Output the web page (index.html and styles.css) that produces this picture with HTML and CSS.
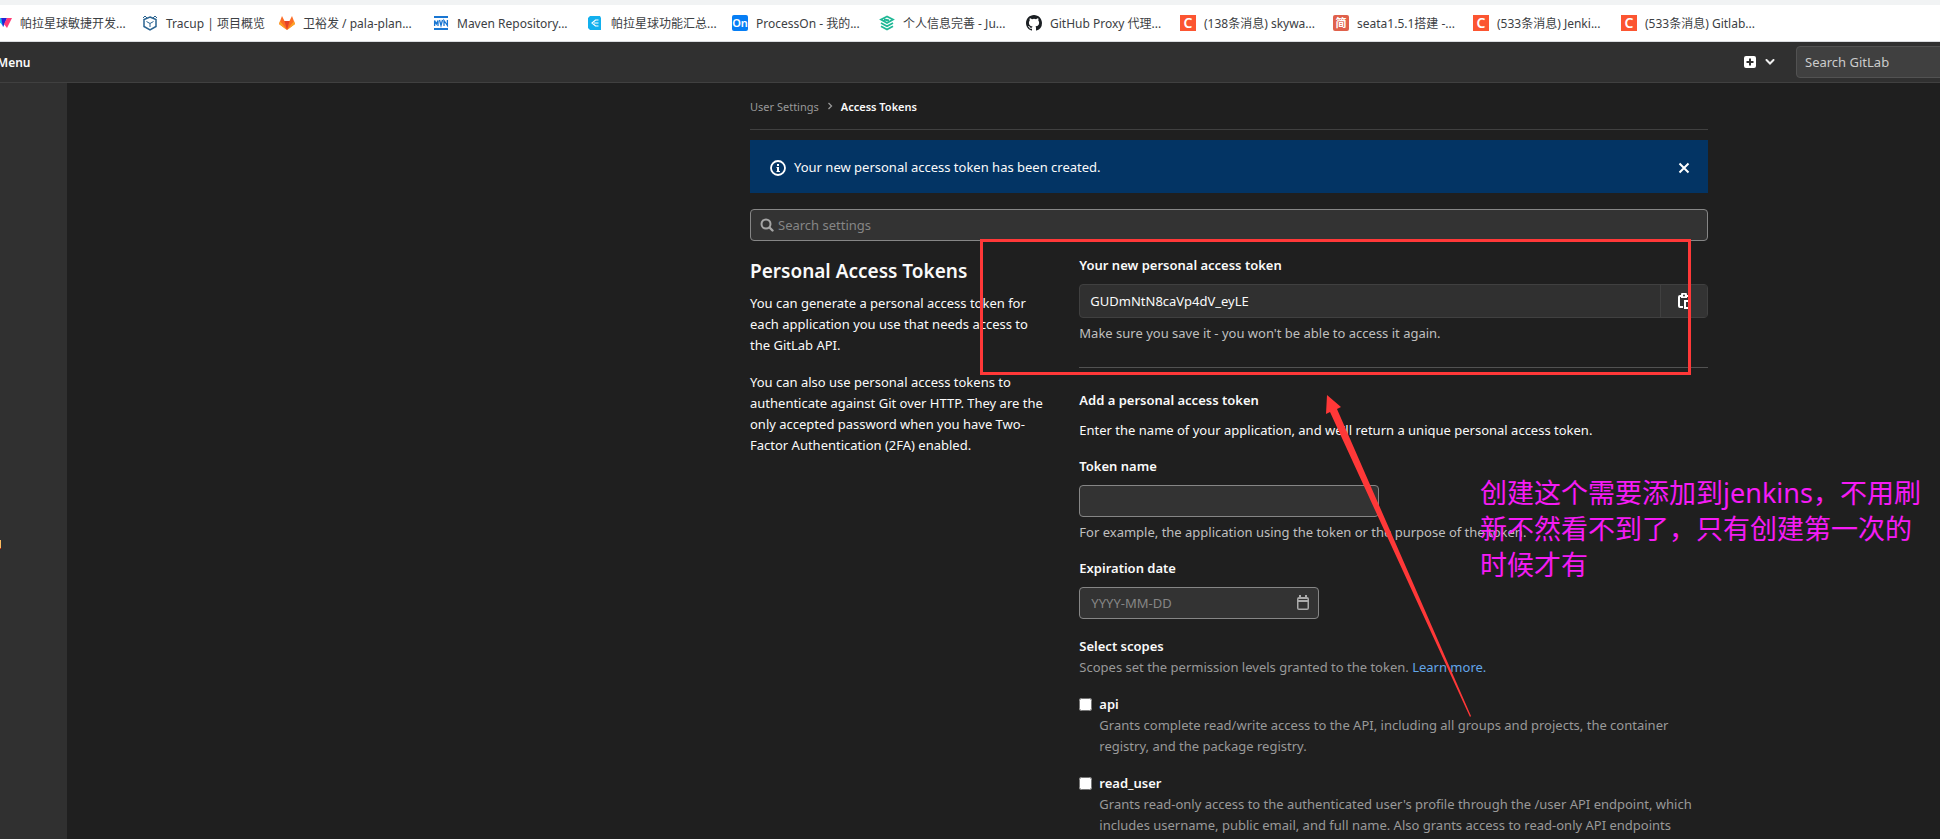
FILE: index.html
```html
<!DOCTYPE html>
<html lang="en">
<head>
<meta charset="utf-8">
<title>Access Tokens · User Settings · GitLab</title>
<link rel="stylesheet" href="styles.css">
</head>
<body>
<nav class="bookmarks" aria-label="Bookmarks">
  <a href="#" class="bookmark"><svg class="favicon" viewBox="0 0 16 16"><path d="M0 3h5l3 9z" fill="#12c2f0"/><path d="M5 3h6l-2 5-2 4z" fill="#2323d6"/><path d="M11 3h5l-5 10-3-4z" fill="#ff3c78"/></svg><span class="bookmark-label">帕拉星球敏捷开发...</span></a>
  <a href="#" class="bookmark"><svg class="favicon" viewBox="0 0 16 16" fill="none" stroke="#2b6491"><path d="M8 2L14 4.500v7L8 15l-6-3.500v-7z" stroke-width="1.500"/><path d="M4.500 6.500L8 8.500l3.500-2M8 8.500V12M1 3l2-2 2 2M11 3l2-2 2 2"/></svg><span class="bookmark-label">Tracup | 项目概览</span></a>
  <a href="#" class="bookmark"><svg class="favicon" viewBox="0 0 16 16"><path d="M3 1l2.500 5h5L13 1l3 8-8 6-8-6z" fill="#fc6d26"/><path d="M5.500 6h5L8 15z" fill="#e24329"/><path d="M0 9l1-3 7 9zM16 9l-1-3-7 9z" fill="#fca326"/></svg><span class="bookmark-label">卫裕发 / pala-plan...</span></a>
  <a href="#" class="bookmark"><svg class="favicon" viewBox="0 0 16 16" fill="none" stroke="#1976d2" stroke-width="2"><path d="M1 2h14M1 14h14"/><path d="M1.600 11V5.500L3.300 9 5 5.500V11M6.500 5l1.500 5.500L9.500 5M11 11V5.500l3.400 5V5" stroke-width="1.300"/></svg><span class="bookmark-label">Maven Repository...</span></a>
  <a href="#" class="bookmark"><svg class="favicon" viewBox="0 0 16 16"><path d="M3 1h10l1 2v12H3l-2-2V3z" fill="#12b0ee"/><path d="M11.500 5H8.500L5 8l3.500 3h3M7 8h4.500" fill="none" stroke="#fff" stroke-width="1.200"/></svg><span class="bookmark-label">帕拉星球功能汇总...</span></a>
  <a href="#" class="bookmark"><span class="favicon tile tile-blue">On</span><span class="bookmark-label">ProcessOn - 我的...</span></a>
  <a href="#" class="bookmark"><svg class="favicon" viewBox="0 0 16 16" fill="none" stroke="#1fb896" stroke-width="1.800"><path d="M8 1.500L2 4.500 8 8l6-3.500zM2 8l6 3.200L14 8M2 11.300l6 3.200 6-3.200M5 4.500l5 1"/></svg><span class="bookmark-label">个人信息完善 - Ju...</span></a>
  <a href="#" class="bookmark"><svg class="favicon" viewBox="0 0 16 16" fill="#1b1f23"><path d="M8 0C3.580 0 0 3.580 0 8c0 3.540 2.290 6.530 5.470 7.590.4.070.55-.17.55-.38 0-.19-.01-.82-.01-1.490-2.010.37-2.530-.49-2.690-.94-.09-.23-.48-.94-.82-1.130-.28-.15-.68-.52-.01-.53.63-.01 1.080.58 1.230.82.72 1.210 1.870.87 2.330.66.07-.52.28-.87.51-1.070-1.780-.2-3.640-.89-3.640-3.950 0-.87.31-1.590.82-2.150-.08-.2-.36-1.020.08-2.120 0 0 .67-.21 2.200.82a7.600 7.600 0 014 0c1.530-1.040 2.200-.82 2.200-.82.44 1.100.16 1.920.08 2.120.51.56.82 1.270.82 2.150 0 3.070-1.870 3.750-3.650 3.950.29.25.54.73.54 1.480 0 1.070-.01 1.930-.01 2.200 0 .21.15.46.55.38A8 8 0 0016 8c0-4.420-3.580-8-8-8z"/></svg><span class="bookmark-label">GitHub Proxy 代理...</span></a>
  <a href="#" class="bookmark"><span class="favicon tile tile-orange">C</span><span class="bookmark-label">(138条消息) skywa...</span></a>
  <a href="#" class="bookmark"><span class="favicon tile tile-red">简</span><span class="bookmark-label">seata1.5.1搭建 -...</span></a>
  <a href="#" class="bookmark"><span class="favicon tile tile-orange">C</span><span class="bookmark-label">(533条消息) Jenki...</span></a>
  <a href="#" class="bookmark"><span class="favicon tile tile-orange">C</span><span class="bookmark-label">(533条消息) Gitlab...</span></a>
</nav>

<header class="topbar">
  <button type="button" class="menu-button">Menu</button>
  <button type="button" class="new-button" aria-label="Create new">
    <svg class="icon-plus" viewBox="0 0 12 12"><path d="M2 0h8a2 2 0 012 2v8a2 2 0 01-2 2H2a2 2 0 01-2-2V2a2 2 0 012-2zm3 2.500V5H2.500v2H5v2.500h2V7h2.500V5H7V2.500z" fill="#fff" fill-rule="evenodd"/></svg>
    <svg class="icon-chevron" viewBox="0 0 10 6"><path d="M1.500 1L5 4.500 8.500 1" fill="none" stroke="#eee" stroke-width="2" stroke-linecap="round"/></svg>
  </button>
  <input class="top-search" type="search" placeholder="Search GitLab" aria-label="Search GitLab">
</header>

<div class="shell">
  <aside class="sidebar"><span class="sidebar-mark"></span></aside>
  <main class="content">
    <nav class="breadcrumb" aria-label="Breadcrumb">
      <a href="#">User Settings</a>
      <svg class="crumb-arrow" viewBox="0 0 6 8"><path d="M1.500 1L4.500 4l-3 3" fill="none" stroke="#999" stroke-width="1.300"/></svg>
      <a href="#" class="current">Access Tokens</a>
    </nav>

    <div class="alert" role="status">
      <svg class="icon" viewBox="0 0 16 16"><circle cx="8" cy="8" r="7" fill="none" stroke="#fff" stroke-width="1.800"/><path d="M7 4h2v2H7zM6.500 7H9v4h1v1H6.500v-1H7V8h-.5z" fill="#fff"/></svg>
      <span class="alert-text">Your new personal access token has been created.</span>
      <button type="button" class="alert-close" aria-label="Dismiss"><svg class="icon-close" viewBox="0 0 12 12"><path d="M1.500 1.500l9 9M10.500 1.500l-9 9" stroke="#fff" stroke-width="2"/></svg></button>
    </div>

    <label class="settings-search">
      <svg class="icon-search" viewBox="0 0 14 14"><circle cx="6" cy="6" r="4.500" fill="none" stroke="#a5a5a5" stroke-width="2"/><path d="M9.500 9.500l3 3" stroke="#a5a5a5" stroke-width="2.400" stroke-linecap="round"/></svg>
      <input type="text" placeholder="Search settings" aria-label="Search settings">
    </label>

    <div class="columns">
      <section class="intro">
        <h1>Personal Access Tokens</h1>
        <p>You can generate a personal access token for each application you use that needs access to the GitLab API.</p>
        <p>You can also use personal access tokens to authenticate against Git over HTTP. They are the only accepted password when you have Two-Factor Authentication (2FA) enabled.</p>
      </section>

      <form class="token-form">
        <label class="field-label" for="new-token">Your new personal access token</label>
        <div class="token-group">
          <input id="new-token" type="text" value="GUDmNtN8caVp4dV_eyLE" readonly>
          <button type="button" aria-label="Copy token"><svg class="icon" viewBox="0 0 16 16"><path d="M7 13H4V4h1v1h6V4h1v2h2V4a2 2 0 00-2-2h-1a3 3 0 00-6 0H4a2 2 0 00-2 2v9a2 2 0 002 2h3zM8 1.500a1 1 0 110 2 1 1 0 010-2z" fill="#fff" fill-rule="evenodd"/><path d="M9 8h5v7H9z" fill="none" stroke="#fff" stroke-width="2"/></svg></button>
        </div>
        <p class="hint">Make sure you save it - you won't be able to access it again.</p>
        <hr>
        <h2>Add a personal access token</h2>
        <p class="lead">Enter the name of your application, and we'll return a unique personal access token.</p>

        <label class="field-label" for="token-name">Token name</label>
        <input class="text-input name-input" id="token-name" type="text">
        <p class="hint hint-name">For example, the application using the token or the purpose of the token.</p>

        <label class="field-label" for="expires">Expiration date</label>
        <div class="text-input date-input">
          <input id="expires" type="text" placeholder="YYYY-MM-DD">
          <svg class="icon" viewBox="0 0 16 16"><path d="M4 0h2v2h4V0h2v2a2 2 0 012 2v9a2 2 0 01-2 2H4a2 2 0 01-2-2V4a2 2 0 012-2zm-.5 4v1h9V4zm0 3v6.500h9V7z" fill="#aaa" fill-rule="evenodd"/></svg>
        </div>

        <h2 class="scopes-title">Select scopes</h2>
        <p class="muted">Scopes set the permission levels granted to the token. <a href="#">Learn more.</a></p>

        <div class="scope">
          <input type="checkbox" id="scope-api"><label for="scope-api">api</label>
          <p>Grants complete read/write access to the API, including all groups and projects, the container registry, and the package registry.</p>
        </div>
        <div class="scope">
          <input type="checkbox" id="scope-read-user"><label for="scope-read-user">read_user</label>
          <p>Grants read-only access to the authenticated user's profile through the /user API endpoint, which includes username, public email, and full name. Also grants access to read-only API endpoints</p>
        </div>
      </form>
    </div>
  </main>
</div>

<div class="mark-box"></div>
<svg class="mark-arrow" viewBox="0 0 146 322"><path d="M2 0l14 12-4 2 134 307-1 1L5 17l-4 2z" fill="#ff3838"/></svg>
<p class="mark-note" lang="zh">创建这个需要添加到jenkins，不用刷新不然看不到了，只有创建第一次的时候才有</p>
</body>
</html>
```
FILE: styles.css
```css
* { box-sizing: border-box; }

body {
  margin: 0;
  height: 100vh;
  overflow: hidden;
  position: relative;
  display: flex;
  flex-direction: column;
  background: #1f1f1f;
  color: #fafafa;
  font: 13px/21px "Noto Sans", "Noto Sans CJK SC", sans-serif;
}

h1, h2, p { margin: 0; }
a { text-decoration: none; }
input, button { font: inherit; color: inherit; }
button { border: 0; padding: 0; background: none; }
svg { display: block; flex: none; }

.icon { width: 16px; height: 16px; }

/* Browser bookmarks */
.bookmarks {
  flex: none;
  display: grid;
  grid-template-columns: 146px 137px 154px 154px 145px 147px 147px 154px 153px 140px 148px 154px;
  align-items: center;
  height: 42px;
  padding-right: 16px;
  margin-left: -4px;
  border-top: 5px solid #f1f3f4;
  border-bottom: 1px solid #dadce0;
  background: #fff;
  font-size: 12px;
}
.bookmark {
  display: flex;
  align-items: center;
  gap: 8px;
  color: #3c4043;
  white-space: nowrap;
}
.favicon { flex: none; width: 16px; height: 16px; }
.tile {
  display: flex;
  align-items: center;
  justify-content: center;
  color: #fff;
  font-size: 11px;
  font-weight: 600;
  line-height: 16px;
}
.tile-blue { background: #067ef5; border-radius: 2px; }
.tile-orange { background: #fc5531; font-size: 14px; }
.tile-red { background: #e0614b; border-radius: 2px; }

/* GitLab top bar */
.topbar {
  flex: none;
  display: flex;
  align-items: center;
  height: 41px;
  border-bottom: 1px solid #404040;
  background: #303030;
}
.menu-button { margin-left: -3px; font-size: 12px; font-weight: 600; }
.new-button { display: flex; align-items: center; gap: 9px; margin-left: auto; }
.icon-plus { width: 12px; height: 12px; }
.icon-chevron { width: 10px; height: 6px; }
.top-search {
  width: 148px;
  height: 32px;
  margin: 0 -4px 0 21px;
  padding: 0 8px;
  border: 1px solid #525252;
  border-radius: 4px;
  background: #404040;
}
.top-search::placeholder { color: #ccc; opacity: 1; }

.shell { flex: 1; min-height: 0; display: flex; }
.sidebar { flex: none; width: 67px; padding-top: 457px; background: #303030; }
.sidebar-mark {
  display: block;
  width: 1px;
  height: 9px;
  background: #fdbc60;
  border-bottom: 1px solid #dd2b0e;
}
.content { flex: 1; padding: 0 232px 0 683px; }

.breadcrumb {
  display: flex;
  align-items: center;
  gap: 8px;
  height: 47px;
  border-bottom: 1px solid #404040;
  font-size: 11px;
}
.breadcrumb a { color: #999; }
.breadcrumb .current { color: #fafafa; font-weight: 600; }
.crumb-arrow { width: 6px; height: 8px; }

.alert {
  display: flex;
  align-items: center;
  gap: 8px;
  margin-top: 10px;
  padding: 17px 18px 15px 20px;
  background: #033464;
}
.alert-text { flex: 1; }
.icon-close { width: 12px; height: 12px; }

.settings-search {
  display: flex;
  align-items: center;
  gap: 4px;
  height: 32px;
  margin-top: 16px;
  padding: 0 9px;
  border: 1px solid #868686;
  border-radius: 4px;
  background: #333;
}
.icon-search { width: 14px; height: 14px; }
.settings-search input,
.date-input input {
  flex: 1;
  min-width: 0;
  padding: 0;
  border: 0;
  outline: 0;
  background: none;
}
::placeholder { color: #868686; opacity: 1; }

.columns {
  display: grid;
  grid-template-columns: 1fr 2fr;
  margin: 0 -15px;
}
.intro, .token-form { padding: 0 15px; }

.intro h1 { margin: 16px 0 8px; font-size: 19px; line-height: 28px; font-weight: 600; }
.intro p { margin-bottom: 16px; }

.token-form { padding-top: 14px; }
.field-label { display: block; margin-bottom: 8px; font-weight: 600; }
.token-group {
  display: flex;
  height: 34px;
  border: 1px solid #404040;
  border-radius: 4px;
  background: #303030;
}
.token-group input {
  flex: 1;
  min-width: 0;
  padding: 0 10px;
  border: 0;
  border-right: 1px solid #404040;
  background: none;
}
.token-group button { display: flex; align-items: center; justify-content: center; width: 46px; background: #333; }
.hint { margin-top: 5px; color: #bfbfbf; }
hr { margin: 23px 0 22px; border: 0; border-top: 1px solid #525252; }
h2 { font-size: 13px; line-height: 21px; font-weight: 600; }
.lead { margin: 9px 0 15px; }
.text-input {
  display: flex;
  align-items: center;
  height: 32px;
  border: 1px solid #868686;
  border-radius: 4px;
  background: #333;
}
.name-input { width: 300px; }
.hint-name { margin-bottom: 15px; }
.date-input { width: 240px; padding: 0 7px 0 11px; }
.scopes-title { margin-top: 17px; }
.muted { color: #999; }
.muted a { color: #63a6e9; }

.scope {
  display: grid;
  grid-template-columns: 13px 1fr;
  column-gap: 7px;
  align-items: center;
  margin-top: 16px;
}
.scope input { width: 13px; height: 13px; margin: 0; }
.scope label { font-weight: 600; }
.scope p { grid-column: 2; color: #999; }

/* Annotations drawn over the page */
.mark-box {
  position: absolute;
  left: 980px;
  top: 239px;
  width: 711px;
  height: 136px;
  border: 3px solid #ff3838;
}
.mark-arrow { position: absolute; left: 1325px; top: 395px; width: 146px; height: 322px; }
.mark-note {
  position: absolute;
  left: 1480px;
  top: 475px;
  width: 450px;
  color: #f51bf5;
  font-size: 27px;
  line-height: 36px;
}
```
